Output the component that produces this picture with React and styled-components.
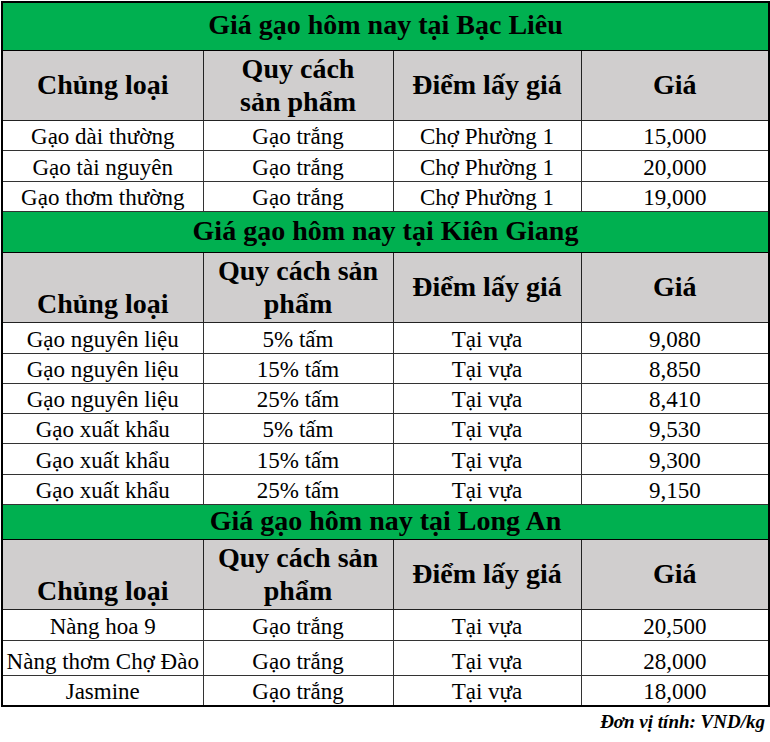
import React from "react";
import styled, { createGlobalStyle } from "styled-components";

const GlobalStyle = createGlobalStyle`
  html, body {
    margin: 0;
    padding: 0;
    background: #fff;
  }
  body {
    font-family: "Liberation Serif", "Times New Roman", serif;
    color: #000;
  }
`;

const sections = [
  {
    title: "Giá gạo hôm nay tại Bạc Liêu",
    titleHeight: 48,
    centerHead: true,
    spec: ["Quy cách", "sản phẩm"],
    rows: [
      ["Gạo dài thường", "Gạo trắng", "Chợ Phường 1", "15,000", 30],
      ["Gạo tài nguyên", "Gạo trắng", "Chợ Phường 1", "20,000", 31],
      ["Gạo thơm thường", "Gạo trắng", "Chợ Phường 1", "19,000", 30],
    ],
  },
  {
    title: "Giá gạo hôm nay tại Kiên Giang",
    titleHeight: 41,
    spec: ["Quy cách sản", "phẩm"],
    rows: [
      ["Gạo nguyên liệu", "5% tấm", "Tại vựa", "9,080", 31],
      ["Gạo nguyên liệu", "15% tấm", "Tại vựa", "8,850", 30],
      ["Gạo nguyên liệu", "25% tấm", "Tại vựa", "8,410", 30],
      ["Gạo xuất khẩu", "5% tấm", "Tại vựa", "9,530", 30],
      ["Gạo xuất khẩu", "15% tấm", "Tại vựa", "9,300", 31],
      ["Gạo xuất khẩu", "25% tấm", "Tại vựa", "9,150", 30],
    ],
  },
  {
    title: "Giá gạo hôm nay tại Long An",
    titleHeight: 35,
    spec: ["Quy cách sản", "phẩm"],
    rows: [
      ["Nàng hoa 9", "Gạo trắng", "Tại vựa", "20,500", 31],
      ["Nàng thơm Chợ Đào", "Gạo trắng", "Tại vựa", "28,000", 35],
      ["Jasmine", "Gạo trắng", "Tại vựa", "18,000", 30],
    ],
  },
];

const Page = styled.div`
  padding: 1px 0 0 1px;
  width: 769px;
  box-sizing: border-box;
`;

const Sheet = styled.table`
  width: 767px;
  table-layout: fixed;
  border-collapse: collapse;
  border: 2px solid #000;
`;

const Title = styled.td`
  background: #00b050;
  height: ${(p) => p.$h - 4}px;
  padding: 0 0 3px;
  border: 1px solid #000;
  text-align: center;
  vertical-align: middle;
  font-weight: bold;
  font-size: 28px;
  line-height: 30px;
  white-space: nowrap;
`;

const Head = styled.th`
  background: #d0cece;
  height: 67px;
  padding: 0 0 2px;
  border: 1px solid #222;
  text-align: center;
  vertical-align: ${(p) => (p.$bottom ? "bottom" : "middle")};
  font-weight: bold;
  font-size: 28px;
  line-height: 33px;
  white-space: nowrap;
`;

const Cell = styled.td`
  height: ${(p) => p.$h - 2}px;
  padding: 0 0 1px;
  border: 1px solid #333;
  text-align: center;
  vertical-align: bottom;
  font-size: 23px;
  line-height: 24px;
  white-space: nowrap;
  overflow: hidden;
`;

const Note = styled.div`
  text-align: right;
  padding: 3px 4px 0 0;
  font-weight: bold;
  font-style: italic;
  font-size: 19px;
  line-height: 24px;
`;

export default function App() {
  return (
    <>
      <GlobalStyle />
      <Page>
        <Sheet>
          <colgroup>
            <col style={{ width: 201 }} />
            <col style={{ width: 190 }} />
            <col style={{ width: 188 }} />
            <col style={{ width: 188 }} />
          </colgroup>
          <tbody>
            {sections.map((s) => (
              <React.Fragment key={s.title}>
                <tr>
                  <Title colSpan={4} $h={s.titleHeight}>
                    {s.title}
                  </Title>
                </tr>
                <tr>
                  <Head $bottom={!s.centerHead}>Chủng loại</Head>
                  <Head $bottom={!s.centerHead}>
                    {s.spec[0]}
                    <br />
                    {s.spec[1]}
                  </Head>
                  <Head>Điểm lấy giá</Head>
                  <Head>Giá</Head>
                </tr>
                {s.rows.map((r, i) => (
                  <tr key={i}>
                    <Cell $h={r[4]}>{r[0]}</Cell>
                    <Cell $h={r[4]}>{r[1]}</Cell>
                    <Cell $h={r[4]}>{r[2]}</Cell>
                    <Cell $h={r[4]}>{r[3]}</Cell>
                  </tr>
                ))}
              </React.Fragment>
            ))}
          </tbody>
        </Sheet>
        <Note>Đơn vị tính: VND/kg</Note>
      </Page>
    </>
  );
}
